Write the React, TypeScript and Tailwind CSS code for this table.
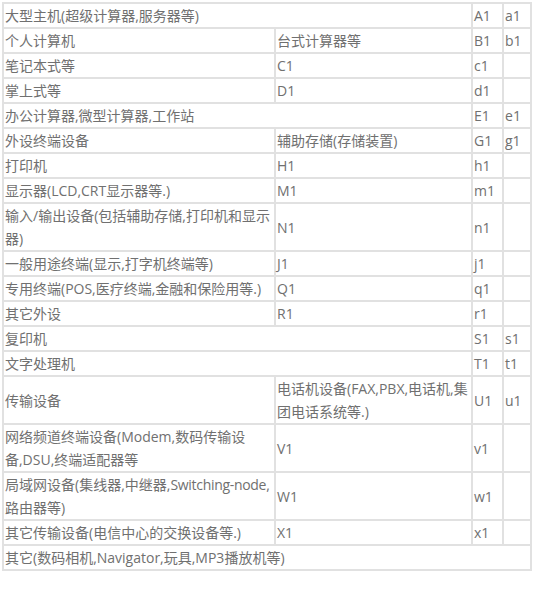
import type { ReactNode } from 'react';

type Cell = { text: ReactNode; span?: number };

const rows: Cell[][] = [
  [{ text: '大型主机(超级计算器,服务器等)', span: 2 }, { text: 'A1' }, { text: 'a1' }],
  [{ text: '个人计算机' }, { text: '台式计算器等' }, { text: 'B1' }, { text: 'b1' }],
  [{ text: '笔记本式等' }, { text: 'C1' }, { text: 'c1' }, { text: '' }],
  [{ text: '掌上式等' }, { text: 'D1' }, { text: 'd1' }, { text: '' }],
  [{ text: '办公计算器,微型计算器,工作站', span: 2 }, { text: 'E1' }, { text: 'e1' }],
  [{ text: '外设终端设备' }, { text: '辅助存储(存储装置)' }, { text: 'G1' }, { text: 'g1' }],
  [{ text: '打印机' }, { text: 'H1' }, { text: 'h1' }, { text: '' }],
  [{ text: '显示器(LCD,CRT显示器等.)' }, { text: 'M1' }, { text: 'm1' }, { text: '' }],
  [{ text: '输入/输出设备(包括辅助存储,打印机和显示器)' }, { text: 'N1' }, { text: 'n1' }, { text: '' }],
  [{ text: '一般用途终端(显示,打字机终端等)' }, { text: 'J1' }, { text: 'j1' }, { text: '' }],
  [{ text: '专用终端(POS,医疗终端,金融和保险用等.)' }, { text: 'Q1' }, { text: 'q1' }, { text: '' }],
  [{ text: '其它外设' }, { text: 'R1' }, { text: 'r1' }, { text: '' }],
  [{ text: '复印机', span: 2 }, { text: 'S1' }, { text: 's1' }],
  [{ text: '文字处理机', span: 2 }, { text: 'T1' }, { text: 't1' }],
  [{ text: '传输设备' }, { text: '电话机设备(FAX,PBX,电话机,集团电话系统等.)' }, { text: 'U1' }, { text: 'u1' }],
  [{ text: '网络频道终端设备(Modem,数码传输设备,DSU,终端适配器等' }, { text: 'V1' }, { text: 'v1' }, { text: '' }],
  [
    {
      text: (
        <>
          局域网设备(集线器,中继器,<span className="whitespace-nowrap tracking-[-0.3px]">Switching-node,</span>路由器等)
        </>
      ),
    },
    { text: 'W1' },
    { text: 'w1' },
    { text: '' },
  ],
  [{ text: '其它传输设备(电信中心的交换设备等.)' }, { text: 'X1' }, { text: 'x1' }, { text: '' }],
  [{ text: '其它(数码相机,Navigator,玩具,MP3播放机等)', span: 4 }],
];

export default function App() {
  return (
    <div className="min-h-screen bg-white pt-[2px] pl-[2px]">
      <table className="w-[530px] table-fixed border-collapse font-['Open_Sans','Noto_Sans_CJK_SC',sans-serif] text-[14px] leading-[23px] text-[#707070]">
        <colgroup>
          <col className="w-[272px]" />
          <col className="w-[197px]" />
          <col className="w-[31px]" />
          <col className="w-[28px]" />
        </colgroup>
        <tbody>
          {rows.map((row, i) => (
            <tr key={i}>
              {row.map((cell, j) => (
                <td
                  key={j}
                  colSpan={cell.span}
                  className="border-2 border-[#e1e1e1] px-[1px] py-0 align-middle"
                >
                  {cell.text}
                </td>
              ))}
            </tr>
          ))}
        </tbody>
      </table>
    </div>
  );
}
